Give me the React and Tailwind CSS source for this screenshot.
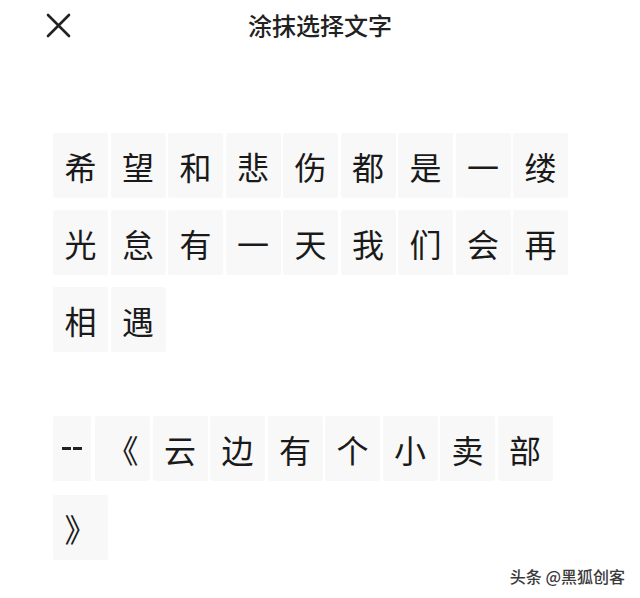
import React from 'react';

const lines = [
  ['希', '望', '和', '悲', '伤', '都', '是', '一', '缕'],
  ['光', '怠', '有', '一', '天', '我', '们', '会', '再'],
  ['相', '遇'],
];

const quote = [
  ['《', '云', '边', '有', '个', '小', '卖', '部'],
  ['》'],
];

const Tile = ({ children }) => (
  <div className="w-[55px] h-[65px] bg-[#f8f8f8] rounded-[2px] flex items-center justify-center text-[32px] text-[#1a1a1a] leading-none">
    {children}
  </div>
);

const App = () => {
  return (
    <div
      className="w-[640px] h-[598px] bg-white relative overflow-hidden"
      style={{ fontFamily: '"Noto Sans CJK SC", "Noto Sans", sans-serif' }}
    >
      {/* Top bar */}
      <div className="h-[50px] grid grid-cols-[1fr_auto_1fr] items-center">
        <div className="pl-[46px] flex items-center">
          <svg width="25" height="25" viewBox="0 0 25 25" fill="none">
            <path d="M2 2 L23 23 M23 2 L2 23" stroke="#222" strokeWidth="2.6" strokeLinecap="round" />
          </svg>
        </div>
        <div className="text-[24px] font-medium text-[#222]">涂抹选择文字</div>
        <div />
      </div>

      {/* Selected text */}
      <div className="pl-[53px] pt-[83px] flex flex-col gap-[12px]">
        {lines.map((line, i) => (
          <div key={i} className="flex gap-[2.5px]">
            {line.map((ch, j) => (
              <Tile key={j}>{ch}</Tile>
            ))}
          </div>
        ))}
      </div>

      <div className="pl-[53px] pt-[64px] flex flex-col gap-[14px]">
        <div className="flex gap-[4px]">
          <div className="w-[38px] h-[65px] bg-[#f8f8f8] rounded-[2px] flex items-center justify-center">
            <div className="flex gap-[2px]">
              <span className="w-[9px] h-[2.5px] bg-[#222]" />
              <span className="w-[9px] h-[2.5px] bg-[#222]" />
            </div>
          </div>
          <div className="flex gap-[2.5px]">
            {quote[0].map((ch, j) => (
              <Tile key={j}>{ch}</Tile>
            ))}
          </div>
        </div>
        <div className="flex gap-[2.5px]">
          {quote[1].map((ch, j) => (
            <Tile key={j}>{ch}</Tile>
          ))}
        </div>
      </div>

      {/* Watermark */}
      <div
        className="absolute right-[15px] bottom-[14px] text-[16px] leading-none text-[#3a3a3a] font-medium"
        style={{ textShadow: '0 0 2px #fff, 0 0 2px #fff' }}
      >
        头条 @黑狐创客
      </div>
    </div>
  );
};

export default App;
